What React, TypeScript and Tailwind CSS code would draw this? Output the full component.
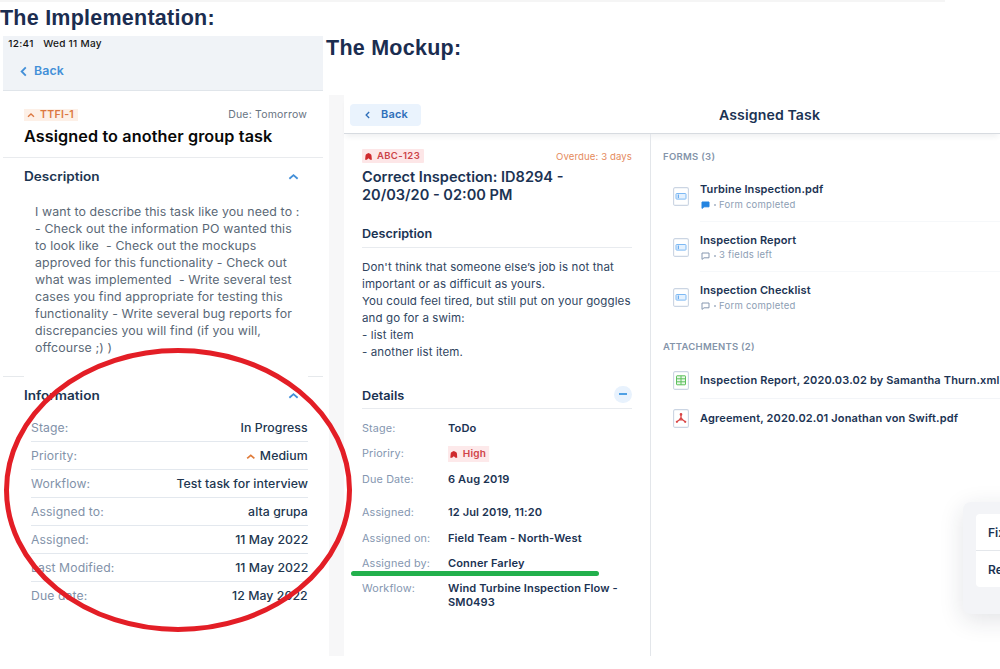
import type { ReactNode } from 'react';

function Chevron({ className, dir = 'up' }: { className: string; dir?: 'up' | 'left' }) {
  return (
    <svg viewBox="0 0 12 12" fill="none" stroke="currentColor" strokeWidth="2" className={className}>
      <path d={dir === 'up' ? 'M1.5 8.5 6 4.5l4.5 4' : 'M8.5 1.500 4 6l4.500 4.500'} />
    </svg>
  );
}

function HighIcon() {
  return (
    <svg viewBox="0 0 7 7" className="h-[7px] w-[7px] shrink-0 text-[#cf2a2e]" fill="currentColor">
      <path d="M.5 2.800Q.5 1.500 1.500 1L3.500.1 5.500 1q1 .500 1 1.800l.4 3.900H5.200L3.500 5.300 1.800 6.700H.1Z" />
    </svg>
  );
}

function InfoRow({ label, children, last }: { label: string; children: ReactNode; last?: boolean }) {
  return (
    <div
      className={`flex h-[28px] items-center justify-between border-b pt-[2px] text-[11.5px] ${last ? 'border-transparent' : 'border-[#e3e8ee]'}`}
    >
      <span className="origin-left scale-x-[1.06] tracking-[0.1px] text-[#8292a9]">{label}</span>
      <span className="flex origin-right scale-x-[1.07] items-center gap-[4px] font-medium tracking-[0.05px] text-[#213650]">
        {children}
      </span>
    </div>
  );
}

function DetailRow({ label, children, className = 'h-[25.300px]' }: { label: string; children: ReactNode; className?: string }) {
  return (
    <div className={`flex items-start text-[10.5px] leading-[14px] ${className}`}>
      <span className="w-[86px] shrink-0">
        <span className="block origin-left scale-x-[1.03] tracking-[0.15px] text-[#8496b0]">{label}</span>
      </span>
      <span className="origin-left scale-x-[1.055] whitespace-nowrap font-semibold tracking-[0.1px] text-[#1b3353]">
        {children}
      </span>
    </div>
  );
}

function FileIcon({ kind }: { kind: 'form' | 'sheet' | 'pdf' }) {
  return (
    <svg viewBox="0 0 16 19" className="h-[19px] w-[16px] shrink-0" fill="none">
      <rect x=".6" y=".6" width="14.800" height="17.800" rx="1.500" stroke="#cbd5e3" strokeWidth="1.100" fill="#fff" />
      {kind === 'form' && (
        <g stroke="#7db9f4">
          <rect x="3" y="6.500" width="10" height="5.600" rx=".7" fill="#e4f1fe" />
          <path d="M5.300 7.500v3.600" stroke="#4f9deb" />
        </g>
      )}
      {kind === 'sheet' && (
        <g stroke="#5cc05c">
          <rect x="3.500" y="4.800" width="9" height="9" rx=".5" fill="#eaf8ea" />
          <path d="M3.500 7.800h9M3.500 10.800h9M8 4.800v9" />
        </g>
      )}
      {kind === 'pdf' && (
        <g stroke="#d94545" strokeWidth="1.300">
          <path d="M8 5.500v3L6.500 10.700 3.800 12.800M8 8.500l1.600 2.300 2.700 2M6.300 10.800h3.600" />
          <circle cx="8" cy="5.400" r=".7" />
          <circle cx="3.900" cy="12.800" r=".5" />
          <circle cx="12.200" cy="12.800" r=".5" />
        </g>
      )}
    </svg>
  );
}

function FormItem({ title, note, done, last }: { title: string; note: string; done?: boolean; last?: boolean }) {
  return (
    <div className={`flex ${last ? 'h-[40px]' : 'h-[50.600px]'}`}>
      <div className="w-[27px] shrink-0 pt-[16px]">
        <FileIcon kind="form" />
      </div>
      <div className={`flex-1 border-b pt-[11px] ${last ? 'border-transparent' : 'border-[#f6f8fa]'}`}>
        <div className="text-[11px] font-semibold leading-[15px] tracking-[0.12px] text-[#1b3353]">{title}</div>
        <div className="flex h-[16px] items-center pl-[1px] text-[9.5px] tracking-[0.25px] text-[#8d9eb4]">
          <svg viewBox="0 0 9 8" className="mr-[4px] h-[8px] w-[9px]">
            <path
              d="M1 1h7v4.800H3L1 7.400Z"
              fill={done ? '#2484e0' : 'none'}
              stroke={done ? '#2484e0' : '#8798b0'}
              strokeWidth="1"
            />
          </svg>
          <span className="mr-[3px] h-[2px] w-[2px] rounded-full bg-[#a3b1c3]" />
          {note}
        </div>
      </div>
    </div>
  );
}

function SectionHeader({ title }: { title: string }) {
  return (
    <div className="flex h-[37px] items-center justify-between pl-[21px] pr-[24px] text-[12.500px] font-semibold text-[#1d3651]">
      <span className="origin-left scale-x-[1.086] pt-[1px]">{title}</span>
      <Chevron className="h-[11px] w-[11px] text-[#438fd8]" />
    </div>
  );
}

function Implementation() {
  return (
    <div className="flex w-[323px] shrink-0 flex-col">
      <h1 className="h-[36px] pt-[6px] font-['Liberation_Sans',sans-serif] text-[21.5px] font-bold leading-[24px] tracking-[0.24px] text-[#1b2d50]">
        The Implementation:
      </h1>
      <div className="ml-[3px] h-[620px]">
        <div className="h-[55px] border-b border-[#e0e5ea] bg-[#f0f3f7]">
          <div className="flex h-[16px] origin-left scale-x-[1.06] items-center gap-[9px] pl-[5px] text-[9.5px] font-medium tracking-[0.25px] text-[#151515]">
            <span>12:41</span>
            <span>Wed 11 May</span>
          </div>
          <div className="flex h-[38px] items-center pl-[15px] text-[12px] font-semibold tracking-[0.1px] text-[#438fd8]">
            <Chevron dir="left" className="mr-[5px] h-[11px] w-[11px]" />
            <span className="origin-left scale-x-[1.03]">Back</span>
          </div>
        </div>
        <div className="h-[67px] border-b border-[#e9ebee] pl-[21px] pr-[16px] pt-[18px]">
          <div className="flex items-center justify-between">
            <span className="flex h-[12px] w-[54px] items-center gap-[5px] bg-[#fdf0e7] px-[3px] text-[10.5px] font-semibold tracking-[0.3px] text-[#dc7740]">
              <Chevron className="h-[8px] w-[8px]" />
              TTFI-1
            </span>
            <span className="text-[10.5px] leading-[12px] tracking-[0.2px] text-[#67737f]">Due: Tomorrow</span>
          </div>
          <h2 className="mt-[6px] origin-left scale-x-[1.045] whitespace-nowrap text-[15.500px] font-semibold leading-[20px] tracking-[0.1px] text-[#080808]">
            Assigned to another group task
          </h2>
        </div>
        <SectionHeader title="Description" />
        <p className="ml-[32px] h-[181px] origin-left scale-x-[1.075] whitespace-pre pt-[8.500px] text-[11.5px] leading-[17.100px] tracking-[0.1px] text-[#5a6876]">
          {`I want to describe this task like you need to :
- Check out the information PO wanted this
to look like  - Check out the mockups
approved for this functionality - Check out
what was implemented  - Write several test
cases you find appropriate for testing this
functionality - Write several bug reports for
discrepancies you will find (if you will,
offcourse ;) )`}
        </p>
        <div className="flex h-px justify-between">
          <span className="w-[21px] bg-[#e6e9ec]" />
          <span className="w-[15px] bg-[#e6e9ec]" />
        </div>
        <SectionHeader title="Information" />
        <div className="ml-[28px] mr-[15px]">
          <InfoRow label="Stage:">In Progress</InfoRow>
          <InfoRow label="Priority:">
            <Chevron className="h-[9px] w-[9px] text-[#e07b39]" />
            Medium
          </InfoRow>
          <InfoRow label="Workflow:">Test task for interview</InfoRow>
          <InfoRow label="Assigned to:">alta grupa</InfoRow>
          <InfoRow label="Assigned:">11 May 2022</InfoRow>
          <InfoRow label="Last Modified:">11 May 2022</InfoRow>
          <InfoRow label="Due date:" last>
            12 May 2022
          </InfoRow>
        </div>
      </div>
    </div>
  );
}

function TaskPane() {
  return (
    <div className="w-[307px] shrink-0 border-r border-[#e3e6ea] pl-[18px] pr-[18px] pt-[15px]">
      <div className="flex h-[14px] items-center justify-between">
        <span className="flex h-[14px] items-center gap-[5px] rounded-[1px] bg-[#fde6e7] pl-[3px] pr-[4px] text-[9.5px] font-semibold tracking-[0.35px] text-[#cc4347]">
          <HighIcon />
          ABC-123
        </span>
        <span className="pt-[2px] text-[9.600px] tracking-[0.1px] text-[#e58a5d]">Overdue: 3 days</span>
      </div>
      <h2 className="mt-[5px] origin-left scale-x-[1.04] whitespace-nowrap text-[14px] font-semibold leading-[17.500px] text-[#1b3353]">
        Correct Inspection: ID8294 -
        <br />
        20/03/20 - 02:00 PM
      </h2>
      <div className="mt-[20px] h-[25px] border-b border-[#e8ebef] pt-[2px] text-[12px] font-semibold leading-[18px] text-[#1b3353]">
        <span className="block origin-left scale-x-[1.05]">Description</span>
      </div>
      <p className="mt-[11px] origin-left scale-x-[1.048] whitespace-pre text-[11px] leading-[17px] tracking-[0.1px] text-[#30455f]">
        {`Don't think that someone else’s job is not that
important or as difficult as yours.
You could feel tired, but still put on your goggles
and go for a swim:
- list item
- another list item.`}
      </p>
      <div className="mt-[24px] flex h-[24px] items-center justify-between border-b border-[#e8ebef] text-[12px] font-semibold text-[#1b3353]">
        <span className="origin-left scale-x-[1.06] pb-[2px]">Details</span>
        <span className="mb-[5px] flex h-[17px] w-[18px] items-center justify-center rounded-full bg-[#e8f2fd]">
          <span className="h-[1.500px] w-[8px] bg-[#4fa0e4]" />
        </span>
      </div>
      <div className="mt-[13px]">
        <DetailRow label="Stage:">ToDo</DetailRow>
        <DetailRow label="Prioriry:">
          <span className="-mt-[1px] flex h-[16px] items-center gap-[5px] bg-[#fde9ea] pl-[2px] pr-[3px] text-[9.500px] tracking-[0.2px] text-[#d04448]">
            <HighIcon />
            High
          </span>
        </DetailRow>
        <DetailRow label="Due Date:" className="h-[33.700px]">
          6 Aug 2019
        </DetailRow>
        <DetailRow label="Assigned:">12 Jul 2019, 11:20</DetailRow>
        <DetailRow label="Assigned on:">Field Team - North-West</DetailRow>
        <DetailRow label="Assigned by:">Conner Farley</DetailRow>
        <DetailRow label="Workflow:" className="h-[30px]">
          Wind Turbine Inspection Flow -
          <br />
          SM0493
        </DetailRow>
      </div>
    </div>
  );
}

function FilesPane() {
  return (
    <div className="min-w-0 flex-1 whitespace-nowrap pl-[12px] pt-[15px]">
      <div className="h-[22px] text-[9.500px] font-semibold leading-[16px] tracking-[0.3px] text-[#8494aa]">FORMS (3)</div>
      <div className="pl-[10px]">
        <FormItem title="Turbine Inspection.pdf" note="Form completed" done />
        <FormItem title="Inspection Report" note="3 fields left" />
        <FormItem title="Inspection Checklist" note="Form completed" last />
      </div>
      <div className="mt-[27px] h-[22px] text-[9.500px] font-semibold leading-[16px] tracking-[0.25px] text-[#8494aa]">
        ATTACHMENTS (2)
      </div>
      <div className="pl-[10px] text-[11px] font-semibold tracking-[0.150px] text-[#1b3353]">
        <div className="flex h-[38px] items-center">
          <span className="w-[27px] shrink-0">
            <FileIcon kind="sheet" />
          </span>
          <span className="flex h-full flex-1 items-center border-b border-[#f3f5f8] pt-[2px]">
            Inspection Report, 2020.03.02 by Samantha Thurn.xml
          </span>
        </div>
        <div className="flex h-[38px] items-center">
          <span className="w-[27px] shrink-0">
            <FileIcon kind="pdf" />
          </span>
          Agreement, 2020.02.01 Jonathan von Swift.pdf
        </div>
      </div>
    </div>
  );
}

function Mockup() {
  return (
    <div className="flex min-w-0 flex-1 flex-col">
      <h1 className="h-[95px] pl-[3px] pt-[36px] font-['Liberation_Sans',sans-serif] text-[21.5px] font-bold leading-[24px] tracking-[0.25px] text-[#1b2d50]">
        The Mockup:
      </h1>
      <div className="flex h-[561px] pl-[6px]">
        <div className="w-[15px] shrink-0 bg-[#f7f7f8]" />
        <div className="flex min-w-0 flex-1 flex-col">
          <div className="flex h-[39px] shrink-0 items-center border-b border-[#d7dbe0] pl-[6px] shadow-[0_5px_5px_-2px_rgba(40,50,70,0.07)]">
            <button className="mt-[1px] flex h-[22px] w-[71px] items-center rounded-[4px] bg-[#eaf3fd] pl-[13px] text-[11px] font-semibold tracking-[0.2px] text-[#2f6fba]">
              <Chevron dir="left" className="mr-[9px] h-[8px] w-[9px]" />
              Back
            </button>
            <div className="ml-[298px] origin-left scale-x-[1.045] whitespace-nowrap pt-[2px] text-[13.500px] font-semibold tracking-[0.1px] text-[#1b3353]">
              Assigned Task
            </div>
          </div>
          <div className="flex min-h-0 flex-1">
            <TaskPane />
            <FilesPane />
          </div>
        </div>
      </div>
    </div>
  );
}

export default function App() {
  return (
    <div className="relative flex h-[669px] w-[1000px] overflow-hidden bg-white font-['Inter',sans-serif]">
      <div className="absolute left-0 top-0 h-[2px] w-[945px] bg-[#f5f5f5]" />
      <Implementation />
      <Mockup />
      <div className="absolute left-[963px] top-[502px] h-[112px] w-[80px] rounded-[8px] bg-[#f3f4f7] pl-[13px] pt-[12px] shadow-[0_6px_24px_rgba(30,40,60,0.13)]">
        <div className="h-[73px] rounded-l-[4px] bg-white text-[12px] font-semibold text-[#1b3353]">
          <div className="flex h-[37px] items-center border-b border-[#e4e7eb] pl-[12px] pt-[2px]">Fix</div>
          <div className="flex h-[36px] items-center pl-[12px] pt-[1px]">Re</div>
        </div>
      </div>
      <svg className="pointer-events-none absolute left-0 top-0 h-[669px] w-[1000px]" fill="none">
        <ellipse cx="178" cy="490" rx="171.500" ry="139.500" stroke="#e31e26" strokeWidth="5" />
        <path d="M353.500 573.500h243" stroke="#22b04c" strokeWidth="5" strokeLinecap="round" />
      </svg>
    </div>
  );
}
